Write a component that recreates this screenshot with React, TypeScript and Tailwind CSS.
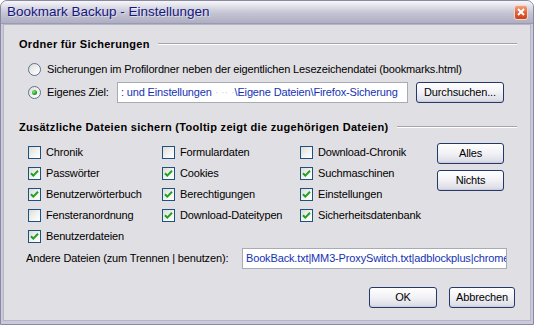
import React from 'react';

const FOLDER_PATH_HEAD = ': und Einstellungen';
const FOLDER_PATH_TAIL = '\\Eigene Dateien\\Firefox-Sicherung';
const OTHER_FILES = 'BookBack.txt|MM3-ProxySwitch.txt|adblockplus|chrome';

const FILE_ROWS: { label: string; checked: boolean }[][] = [
  [
    { label: 'Chronik', checked: false },
    { label: 'Formulardaten', checked: false },
    { label: 'Download-Chronik', checked: false },
  ],
  [
    { label: 'Passwörter', checked: true },
    { label: 'Cookies', checked: true },
    { label: 'Suchmaschinen', checked: true },
  ],
  [
    { label: 'Benutzerwörterbuch', checked: true },
    { label: 'Berechtigungen', checked: true },
    { label: 'Einstellungen', checked: true },
  ],
  [
    { label: 'Fensteranordnung', checked: false },
    { label: 'Download-Dateitypen', checked: true },
    { label: 'Sicherheitsdatenbank', checked: true },
  ],
  [{ label: 'Benutzerdateien', checked: true }],
];

function CheckBox({ checked }: { checked: boolean }) {
  return (
    <span className="flex h-[13px] w-[13px] shrink-0 items-center justify-center border border-[#1c5180] bg-[linear-gradient(135deg,#dcdcd7_0%,#f4f4f2_60%,#ffffff_100%)]">
      {checked && (
        <svg width="9" height="9" viewBox="0 0 9 9" aria-hidden>
          <path d="M1 4.2 L3.3 6.6 L8 1.8" fill="none" stroke="#21a121" strokeWidth="2" />
        </svg>
      )}
    </span>
  );
}

function Radio({ selected }: { selected: boolean }) {
  return (
    <span className="flex h-[13px] w-[13px] shrink-0 items-center justify-center rounded-full border border-[#5a7393] bg-[linear-gradient(135deg,#dcdcd7_0%,#f4f4f2_60%,#ffffff_100%)]">
      {selected && (
        <span className="h-[5px] w-[5px] rounded-full bg-[radial-gradient(circle_at_35%_35%,#8ee28e_0%,#21a121_60%,#107010_100%)]" />
      )}
    </span>
  );
}

function XpButton({ label, className = '' }: { label: string; className?: string }) {
  return (
    <button
      type="button"
      className={`flex h-[21px] shrink-0 items-center justify-center rounded-[3px] border border-[#25386a] bg-[linear-gradient(to_bottom,#ffffff_0%,#f3f3f7_45%,#dedee8_90%,#c9c9d6_100%)] text-[11px] text-black ${className}`}
    >
      {label}
    </button>
  );
}

function SectionHeading({ title }: { title: string }) {
  return (
    <div className="flex h-[14px] items-center">
      <span className="shrink-0 text-[11px] leading-[14px] font-bold tracking-[0.3px] text-black">{title}</span>
      <span className="ml-[8px] h-[2px] flex-1 border-t border-b border-t-[#a3a3ab] border-b-white" />
    </div>
  );
}

export default function App() {
  return (
    <div className="flex h-[325px] w-[534px] flex-col overflow-hidden rounded-t-[7px] border border-[#8a89a4] bg-[#c9c9d9] font-['Liberation_Sans',Arial,sans-serif] text-[11px] tracking-[-0.15px] text-black">
      <div className="flex h-[23px] shrink-0 items-center justify-between border-b border-[#9a9ab2] bg-[linear-gradient(to_bottom,#f6f6f9_0%,#e2e2ea_22%,#c4c4d4_55%,#aeaec2_100%)] pr-[5px] pl-[6px]">
        <span className="text-[13.5px] leading-none tracking-normal text-[#16167e] [text-shadow:1px_1px_0_rgba(255,255,255,0.5)]">
          Bookmark Backup - Einstellungen
        </span>
        <span className="flex h-[15px] w-[14px] items-center justify-center rounded-[3px] border border-[#f5d6c8] bg-[linear-gradient(to_bottom,#f2a07d_0%,#e2623a_50%,#c8401f_100%)]">
          <svg width="8" height="8" viewBox="0 0 8 8" aria-hidden>
            <path d="M1 1 L7 7 M7 1 L1 7" stroke="#ffffff" strokeWidth="2" />
          </svg>
        </span>
      </div>

      <div className="mx-[2px] mb-[3px] flex flex-1 flex-col border border-[#b5b5c8] bg-[#e0dfe3] pt-[12px] pr-[13px] pl-[15px]">
        <SectionHeading title="Ordner für Sicherungen" />

        <div className="mt-[10px] flex h-[16px] items-center gap-[6px] pl-[9px]">
          <Radio selected={false} />
          <span>Sicherungen im Profilordner neben der eigentlichen Lesezeichendatei (bookmarks.html)</span>
        </div>

        <div className="mt-[5px] flex h-[21px] items-center pl-[9px]">
          <Radio selected />
          <span className="ml-[6px] w-[70px] shrink-0">Eigenes Ziel:</span>
          <div className="flex h-[21px] w-[291px] items-center overflow-hidden border border-[#a5acb5] bg-white pl-[3px] whitespace-nowrap text-[#1432b4]">
            <span>{FOLDER_PATH_HEAD}</span>
            <span className="text-[#d4d4dc]">&nbsp;·&nbsp;··&nbsp;·</span>
            <span>{FOLDER_PATH_TAIL}</span>
          </div>
          <XpButton label="Durchsuchen..." className="ml-[8px] w-[88px]" />
        </div>

        <div className="mt-[17px]">
          <SectionHeading title="Zusätzliche Dateien sichern (Tooltip zeigt die zugehörigen Dateien)" />
        </div>

        <div className="mt-[8px] flex pl-[9px]">
          <div className="grid grid-cols-[134px_138px_137px]">
            {FILE_ROWS.flat().map((item) => (
              <div key={item.label} className="flex h-[21px] items-center gap-[5px]">
                <CheckBox checked={item.checked} />
                <span>{item.label}</span>
              </div>
            ))}
          </div>
          <div className="flex flex-col gap-[6px] pt-[1px]">
            <XpButton label="Alles" className="w-[67px]" />
            <XpButton label="Nichts" className="w-[67px]" />
          </div>
        </div>

        <div className="mt-[1px] flex h-[21px] items-center pl-[7px]">
          <span className="w-[216px] shrink-0">Andere Dateien (zum Trennen | benutzen):</span>
          <div className="flex h-[21px] w-[265px] items-center overflow-hidden border border-[#a5acb5] bg-white pl-[3px] whitespace-nowrap text-[#1432b4]">
            {OTHER_FILES}
          </div>
        </div>

        <div className="mt-[18px] flex justify-end gap-[12px] pr-[2px]">
          <XpButton label="OK" className="w-[68px]" />
          <XpButton label="Abbrechen" className="w-[66px]" />
        </div>
      </div>
    </div>
  );
}
